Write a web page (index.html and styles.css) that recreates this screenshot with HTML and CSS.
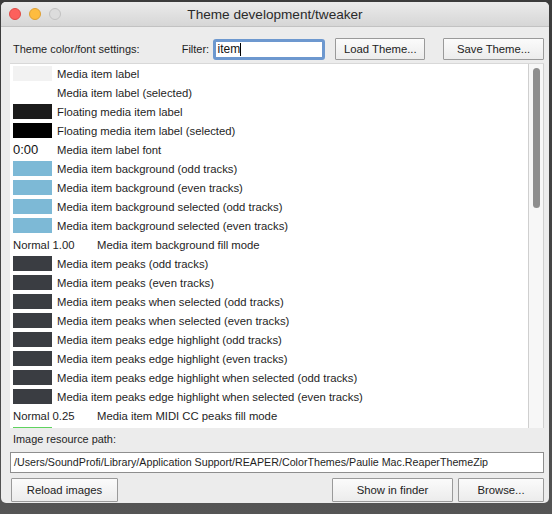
FILE: index.html
```html
<!DOCTYPE html>
<html>
<head>
<meta charset="utf-8">
<link rel="stylesheet" href="styles.css">
</head>
<body>
<div class="window">
  <div class="titlebar">
    <div class="lights">
      <span class="light red"></span>
      <span class="light yellow"></span>
      <span class="light gray"></span>
    </div>
    <div class="title">Theme development/tweaker</div>
  </div>
  <div class="content">
    <div class="toprow">
      <span class="lbl settings">Theme color/font settings:</span>
      <span class="lbl filter">Filter:</span>
      <div class="filterbox"><span class="ftext">item</span><span class="caret"></span></div>
      <button class="btn load">Load Theme...</button>
      <button class="btn save">Save Theme...</button>
    </div>
    <div class="listbox">
      <div class="rows">
        <div class="row"><span class="sw" style="background:#f2f2f2"></span><span class="name">Media item label</span></div>
        <div class="row"><span class="sw" style="background:#ffffff"></span><span class="name">Media item label (selected)</span></div>
        <div class="row"><span class="sw" style="background:#1b1b1b"></span><span class="name">Floating media item label</span></div>
        <div class="row"><span class="sw" style="background:#000000"></span><span class="name">Floating media item label (selected)</span></div>
        <div class="row"><span class="fontval">0:00</span><span class="name">Media item label font</span></div>
        <div class="row"><span class="sw" style="background:#7db9d6"></span><span class="name">Media item background (odd tracks)</span></div>
        <div class="row"><span class="sw" style="background:#7db9d6"></span><span class="name">Media item background (even tracks)</span></div>
        <div class="row"><span class="sw" style="background:#7db9d6"></span><span class="name">Media item background selected (odd tracks)</span></div>
        <div class="row"><span class="sw" style="background:#7db9d6"></span><span class="name">Media item background selected (even tracks)</span></div>
        <div class="row"><span class="modeval">Normal 1.00</span><span class="name">Media item background fill mode</span></div>
        <div class="row"><span class="sw" style="background:#3a3d42"></span><span class="name">Media item peaks (odd tracks)</span></div>
        <div class="row"><span class="sw" style="background:#3a3d42"></span><span class="name">Media item peaks (even tracks)</span></div>
        <div class="row"><span class="sw" style="background:#3a3d42"></span><span class="name">Media item peaks when selected (odd tracks)</span></div>
        <div class="row"><span class="sw" style="background:#3a3d42"></span><span class="name">Media item peaks when selected (even tracks)</span></div>
        <div class="row"><span class="sw" style="background:#3a3d42"></span><span class="name">Media item peaks edge highlight (odd tracks)</span></div>
        <div class="row"><span class="sw" style="background:#3a3d42"></span><span class="name">Media item peaks edge highlight (even tracks)</span></div>
        <div class="row"><span class="sw" style="background:#3a3d42"></span><span class="name">Media item peaks edge highlight when selected (odd tracks)</span></div>
        <div class="row"><span class="sw" style="background:#3a3d42"></span><span class="name">Media item peaks edge highlight when selected (even tracks)</span></div>
        <div class="row"><span class="modeval">Normal 0.25</span><span class="name">Media item MIDI CC peaks fill mode</span></div>
        <div class="row"><span class="sw green"></span><span class="name"></span></div>
      </div>
      <div class="scrollbar"><div class="thumb"></div></div>
    </div>
    <div class="pathlabel">Image resource path:</div>
    <div class="pathbox">/Users/SoundProfi/Library/Application Support/REAPER/ColorThemes/Paulie Mac.ReaperThemeZip</div>
    <div class="bottomrow">
      <button class="btn reload">Reload images</button>
      <span class="spacer"></span>
      <button class="btn finder">Show in finder</button>
      <button class="btn browse">Browse...</button>
    </div>
  </div>
</div>
</body>
</html>
```
FILE: styles.css
```css
html, body {
  margin: 0;
  padding: 0;
}
body {
  width: 552px;
  height: 514px;
  overflow: hidden;
  background: linear-gradient(#3c3c3c, #4a4a4a 80%, #555555);
  font-family: "Liberation Sans", Arial, sans-serif;
  font-size: 11.3px;
  color: #1e1e1e;
}
.window {
  margin: 2px 0 0 1px;
  width: 548px;
  height: 501px;
  background: #ececec;
  border-radius: 5px;
  overflow: hidden;
  display: flex;
  flex-direction: column;
}
.titlebar {
  height: 24px;
  flex: none;
  background: linear-gradient(#ebebeb, #d6d6d6);
  border-bottom: 1px solid #c2c2c2;
  display: flex;
  align-items: center;
  position: relative;
}
.lights {
  display: flex;
  gap: 8px;
  padding-left: 8px;
}
.light {
  width: 12px;
  height: 12px;
  border-radius: 50%;
  box-sizing: border-box;
}
.light.red { background: #fc605c; border: 1px solid #de4a45; }
.light.yellow { background: #fdbc40; border: 1px solid #dea033; }
.light.gray { background: #dcdcdc; border: 1px solid #c2c2c2; }
.title {
  position: absolute;
  left: 0;
  right: 0;
  top: 0;
  line-height: 25px;
  text-align: center;
  font-size: 13.6px;
  color: #2a2a2a;
  font-family: "Liberation Sans", Arial, sans-serif;
}
.content {
  flex: 1;
  display: flex;
  flex-direction: column;
  padding: 0 5px 0 8px;
}
.toprow {
  height: 22px;
  margin-top: 11px;
  display: flex;
  align-items: center;
}
.lbl.settings { margin-left: 4px; width: 169px; font-size: 11px; }
.lbl.filter { width: 31px; font-size: 11px; }
.filterbox {
  width: 105px;
  height: 15px;
  border: 3px solid #6d98cf;
  border-radius: 3px;
  background: #fff;
  display: flex;
  align-items: center;
  padding-left: 2px;
  font-size: 12px;
  color: #111;
}
.caret {
  width: 1px;
  height: 13px;
  background: #000;
}
.btn {
  font-family: "Liberation Sans", Arial, sans-serif;
  font-size: 11.3px;
  color: #222;
  background: linear-gradient(#fbfbfb, #ececec);
  border: 1px solid #9a9a9a;
  border-radius: 1px;
  height: 22px;
  padding: 0;
}
.btn.load { width: 90px; margin-left: 10px; }
.btn.save { width: 101px; margin-left: 18px; }
.listbox {
  margin-top: 3px;
  margin-left: 1px;
  height: 364px;
  border-top: 1px solid #d8d8d8;
  display: flex;
  background: #fff;
  overflow: hidden;
}
.rows {
  flex: 1;
  padding-top: 0;
  overflow: hidden;
}
.row {
  height: 19px;
  display: flex;
  align-items: center;
  padding-left: 3px;
  white-space: nowrap;
}
.sw {
  width: 39px;
  height: 15px;
  flex: none;
  margin-right: 5px;
  box-sizing: border-box;
}
.sw.green {
  background: #fff;
  border-top: 2px solid #5fd35f;
}
.fontval {
  width: 44px;
  font-size: 13px;
  color: #111;
  flex: none;
}
.modeval {
  width: 84px;
  flex: none;
}
.scrollbar {
  width: 14px;
  flex: none;
  background: #f7f7f7;
  border-left: 1px solid #cfcfcf;
  border-right: 1px solid #cfcfcf;
  padding-top: 4px;
  display: flex;
  justify-content: center;
}
.thumb {
  width: 7px;
  height: 140px;
  border-radius: 4px;
  background: #8e8e8e;
}
.pathlabel {
  margin-top: 3px;
  margin-left: 4px;
  height: 16px;
  line-height: 16px;
  font-size: 10.9px;
}
.pathbox {
  margin-top: 5px;
  margin-left: 1px;
  height: 19px;
  line-height: 19px;
  border: 1px solid #8e8e8e;
  background: #fff;
  padding-left: 3px;
  font-size: 10.7px;
  white-space: nowrap;
  overflow: hidden;
}
.bottomrow {
  margin-top: 5px;
  display: flex;
  align-items: center;
}
.btn.reload { width: 107px; height: 24px; margin-left: 2px; }
.spacer { flex: 1; }
.btn.finder { width: 121px; height: 24px; }
.btn.browse { width: 86px; height: 24px; margin-left: 5px; }
```
